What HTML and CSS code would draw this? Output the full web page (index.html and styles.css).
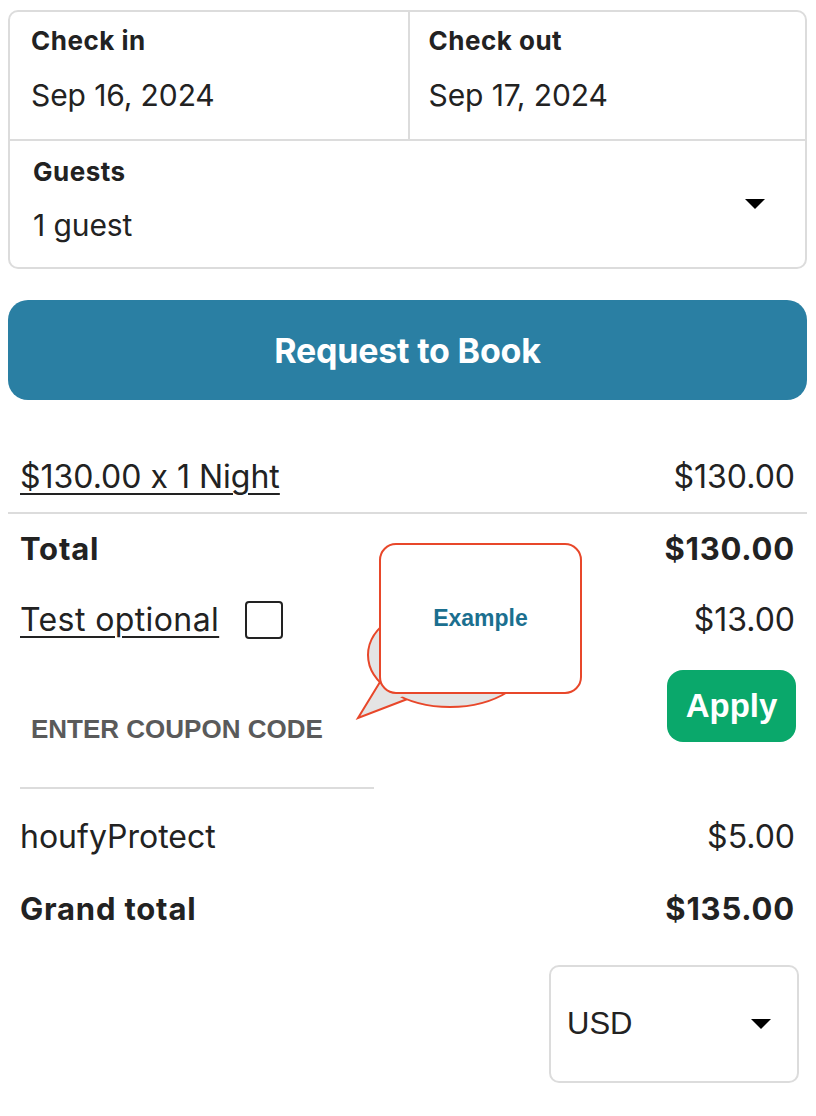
FILE: index.html
```html
<!DOCTYPE html>
<html>
<head>
<meta charset="utf-8">
<link rel="stylesheet" href="styles.css">
</head>
<body>
<div class="page">
  <div class="card">
    <div class="dates">
      <div class="cell">
        <div class="label">Check in</div>
        <div class="value">Sep 16, 2024</div>
      </div>
      <div class="cell cell-right">
        <div class="label">Check out</div>
        <div class="value">Sep 17, 2024</div>
      </div>
    </div>
    <div class="guests">
      <div>
        <div class="label">Guests</div>
        <div class="value">1 guest</div>
      </div>
      <span class="caret"></span>
    </div>
  </div>

  <button class="book">Request to Book</button>

  <div class="summary">
    <div class="row"><span class="link">$130.00 x 1 Night</span><span>$130.00</span></div>
    <div class="divider"></div>
    <div class="row row-total strong"><span>Total</span><span>$130.00</span></div>
    <div class="row row-opt"><span class="opt"><span class="link">Test optional</span><span class="check"></span></span><span>$13.00</span></div>
    <div class="coupon">
      <div class="coupon-input">ENTER COUPON CODE</div>
      <button class="apply">Apply</button>
    </div>
    <div class="row row-protect"><span>houfyProtect</span><span>$5.00</span></div>
    <div class="row row-grand strong"><span>Grand total</span><span>$135.00</span></div>
    <div class="currency-wrap">
      <div class="currency"><span>USD</span><span class="caret"></span></div>
    </div>
  </div>

  <svg class="bubble" width="260" height="200" viewBox="0 0 260 200">
    <polygon points="40,152 18,188 70,168" fill="#e4e4e4" stroke="#e8472a" stroke-width="2" stroke-linejoin="miter"/>
    <ellipse cx="110" cy="125" rx="82" ry="52" fill="#e4e4e4" stroke="#e8472a" stroke-width="2"/>
    <polygon points="43,150 24,182 66,165" fill="#e4e4e4"/>
    <rect x="40" y="14" width="201" height="149" rx="16" ry="16" fill="#ffffff" stroke="#e8472a" stroke-width="2"/>
    <text x="140.5" y="90" text-anchor="middle" class="bubble-text">Example</text>
  </svg>
</div>
</body>
</html>
```
FILE: styles.css
```css
* { box-sizing: border-box; }
html, body { margin: 0; padding: 0; background: #fff; }
body {
  font-family: "Inter", "Noto Sans", sans-serif;
  font-feature-settings: "calt" 0;
  color: #222;
}
.page {
  position: relative;
  width: 816px;
  padding: 10px 9px 0 8px;
}
.card {
  border: 2px solid #dcdcdc;
  border-radius: 10px;
}
.dates {
  display: grid;
  grid-template-columns: 1fr 1fr;
  height: 129px;
  border-bottom: 2px solid #dcdcdc;
}
.cell {
  padding: 13px 21px 0 21px;
}
.cell-right {
  border-left: 2px solid #dcdcdc;
  padding-left: 19px;
}
.label {
  font-size: 26px;
  line-height: 32px;
  font-weight: 700;
  color: #222;
  letter-spacing: 0.5px;
}
.value {
  font-size: 30px;
  line-height: 44px;
  margin-top: 16px;
  color: #222;
  letter-spacing: -0.1px;
}
.guests {
  display: flex;
  align-items: center;
  justify-content: space-between;
  height: 126px;
  padding: 0 40px 0 23px;
}
.guests .value { margin-top: 15px; }
.guests > div { margin-top: -5px; }
.caret {
  width: 0;
  height: 0;
  border-left: 10px solid transparent;
  border-right: 10px solid transparent;
  border-top: 10px solid #000;
}
.book {
  display: block;
  width: 100%;
  height: 100px;
  margin-top: 31px;
  border: none;
  border-radius: 20px;
  background: #2a7fa3;
  color: #fff;
  font-family: "Inter", sans-serif;
  font-feature-settings: "calt" 0;
  font-size: 34px;
  font-weight: 700;
  letter-spacing: -0.2px;
}
.summary {
  margin-top: 55px;
}
.row {
  display: flex;
  justify-content: space-between;
  align-items: center;
  padding: 0 12px;
  font-size: 32px;
  line-height: 44px;
  letter-spacing: 0;
}
.strong { font-weight: 700; font-size: 31px; letter-spacing: 0.8px; }
.link {
  text-decoration: underline;
  text-decoration-thickness: 2px;
  text-underline-offset: 5px;
}
.divider {
  height: 2px;
  background: #dcdcdc;
  margin-top: 13px;
}
.row-total { margin-top: 13px; }
.row-opt { margin-top: 27px; }
.opt { display: flex; align-items: center; }
.opt .link { letter-spacing: 0.4px; }
.check {
  width: 38px;
  height: 38px;
  border: 2px solid #222;
  border-radius: 4px;
  margin-left: 26px;
}
.coupon {
  display: flex;
  justify-content: space-between;
  align-items: flex-start;
  margin-top: 28px;
  padding: 0 11px 0 12px;
}
.coupon-input {
  width: 354px;
  height: 119px;
  border-bottom: 2px solid #dcdcdc;
  padding: 42px 0 0 11px;
  font-family: "Liberation Sans", Arial, sans-serif;
  font-weight: 700;
  font-size: 26px;
  line-height: 34px;
  color: #5a5a5a;
}
.apply {
  width: 129px;
  height: 72px;
  border: none;
  border-radius: 16px;
  background: #0aa86b;
  color: #fff;
  font-family: "Liberation Sans", Arial, sans-serif;
  font-weight: 700;
  font-size: 33px;
  padding: 0;
}
.row-protect { margin-top: 26px; }
.row-grand { margin-top: 28px; }
.currency-wrap {
  display: flex;
  justify-content: flex-end;
  margin-top: 34px;
  padding-right: 8px;
}
.currency {
  width: 250px;
  height: 118px;
  border: 2px solid #dcdcdc;
  border-radius: 10px;
  display: flex;
  align-items: center;
  justify-content: space-between;
  padding: 0 26px 0 16px;
  font-family: "Liberation Sans", Arial, sans-serif;
  font-size: 31px;
  color: #222;
}
.bubble {
  position: absolute;
  left: 340px;
  top: 530px;
}
.bubble-text {
  font-family: "Liberation Sans", Arial, sans-serif;
  font-weight: 700;
  font-size: 23px;
  fill: #1b6f8f;
  dominant-baseline: middle;
}
```
